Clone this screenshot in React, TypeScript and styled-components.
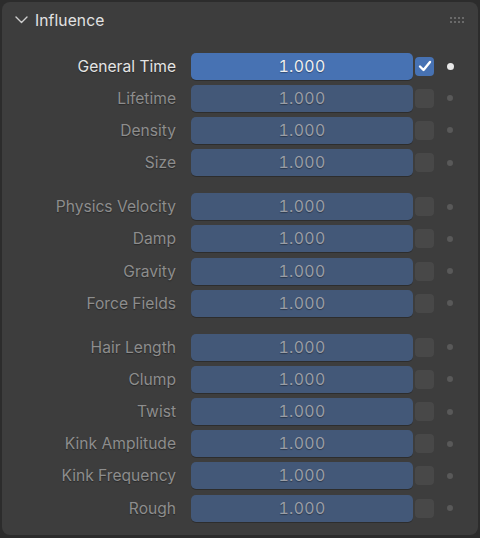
import React from 'react';
import styled, { createGlobalStyle } from 'styled-components';

type Row = { label: string; enabled?: boolean };

const groups: Row[][] = [
  [{ label: 'General Time', enabled: true }, { label: 'Lifetime' }, { label: 'Density' }, { label: 'Size' }],
  [{ label: 'Physics Velocity' }, { label: 'Damp' }, { label: 'Gravity' }, { label: 'Force Fields' }],
  [
    { label: 'Hair Length' },
    { label: 'Clump' },
    { label: 'Twist' },
    { label: 'Kink Amplitude' },
    { label: 'Kink Frequency' },
    { label: 'Rough' },
  ],
];

const GlobalStyle = createGlobalStyle`
  html, body {
    margin: 0;
    padding: 0;
    background: #2c2c2c;
    font-family: Inter, "Noto Sans", "DejaVu Sans", sans-serif;
  }
`;

const Panel = styled.div`
  margin: 2px;
  width: 476px;
  height: 533px;
  box-sizing: border-box;
  background: #3d3d3d;
  border-radius: 8px;
`;

const Header = styled.div`
  height: 36px;
  display: flex;
  align-items: center;
  padding: 0 14px 0 13px;
  color: #e2e2e2;
  font-size: 15.6px;
`;

const Title = styled.span`
  margin-left: 7px;
  flex: 1;
  letter-spacing: 0.1px;
`;

const Grip = styled.div`
  display: grid;
  grid-template-columns: repeat(4, 2px);
  grid-auto-rows: 2px;
  gap: 2px 2px;

  span {
    background: #6a6a6a;
  }
`;

const Body = styled.div`
  padding-top: 12px;
  display: flex;
  flex-direction: column;
  gap: 11.8px;
`;

const Group = styled.div`
  display: flex;
  flex-direction: column;
`;

const RowWrap = styled.div`
  height: 32.2px;
  display: grid;
  grid-template-columns: 174px 237px 21px 1fr;
  align-items: center;
`;

const Label = styled.div<{ $on: boolean }>`
  text-align: right;
  font-size: 15.6px;
  color: ${(p) => (p.$on ? '#e4e4e4' : '#8d8d8d')};
  text-shadow: 0 1px 1px rgba(0, 0, 0, 0.35);
  white-space: nowrap;
`;

const Field = styled.div<{ $on: boolean }>`
  margin-left: 15px;
  height: 27px;
  border-radius: 5px;
  background: ${(p) => (p.$on ? '#4772b3' : '#435878')};
  color: ${(p) => (p.$on ? '#f0f0f0' : '#9a9ea6')};
  display: flex;
  align-items: center;
  justify-content: center;
  font-size: 15.8px;
  font-variant-numeric: tabular-nums;
  letter-spacing: 0.4px;
  text-shadow: 0 1px 1px rgba(0, 0, 0, 0.35);
  box-shadow: 0 1px 0 rgba(0, 0, 0, 0.25);
`;

const Check = styled.div<{ $on: boolean }>`
  margin-left: 2px;
  width: 19px;
  height: 19px;
  border-radius: 4px;
  background: ${(p) => (p.$on ? '#4772b3' : '#484848')};
  display: flex;
  align-items: center;
  justify-content: center;
`;

const Dot = styled.div<{ $on: boolean }>`
  margin-left: ${(p) => (p.$on ? '12.5px' : '13px')};
  width: ${(p) => (p.$on ? '7px' : '6px')};
  height: ${(p) => (p.$on ? '7px' : '6px')};
  border-radius: 50%;
  background: ${(p) => (p.$on ? '#e8e8e8' : '#595959')};
`;

const Chevron = () => (
  <svg width="13" height="8" viewBox="0 0 13 8" fill="none">
    <path d="M1 1 L6.5 6.5 L12 1" stroke="#cfcfcf" strokeWidth="1.4" strokeLinecap="round" strokeLinejoin="round" />
  </svg>
);

const Tick = () => (
  <svg width="14" height="12" viewBox="0 0 14 12" fill="none">
    <path d="M2 6.5 L5.5 10 L12 2" stroke="#ffffff" strokeWidth="2.4" strokeLinecap="round" strokeLinejoin="round" />
  </svg>
);

const App: React.FC = () => (
  <>
    <GlobalStyle />
    <Panel>
      <Header>
        <Chevron />
        <Title>Influence</Title>
        <Grip>
          {Array.from({ length: 8 }).map((_, i) => (
            <span key={i} />
          ))}
        </Grip>
      </Header>
      <Body>
        {groups.map((g, gi) => (
          <Group key={gi}>
            {g.map((r) => {
              const on = !!r.enabled;
              return (
                <RowWrap key={r.label}>
                  <Label $on={on}>{r.label}</Label>
                  <Field $on={on}>1.000</Field>
                  <Check $on={on}>{on && <Tick />}</Check>
                  <Dot $on={on} />
                </RowWrap>
              );
            })}
          </Group>
        ))}
      </Body>
    </Panel>
  </>
);

export default App;
